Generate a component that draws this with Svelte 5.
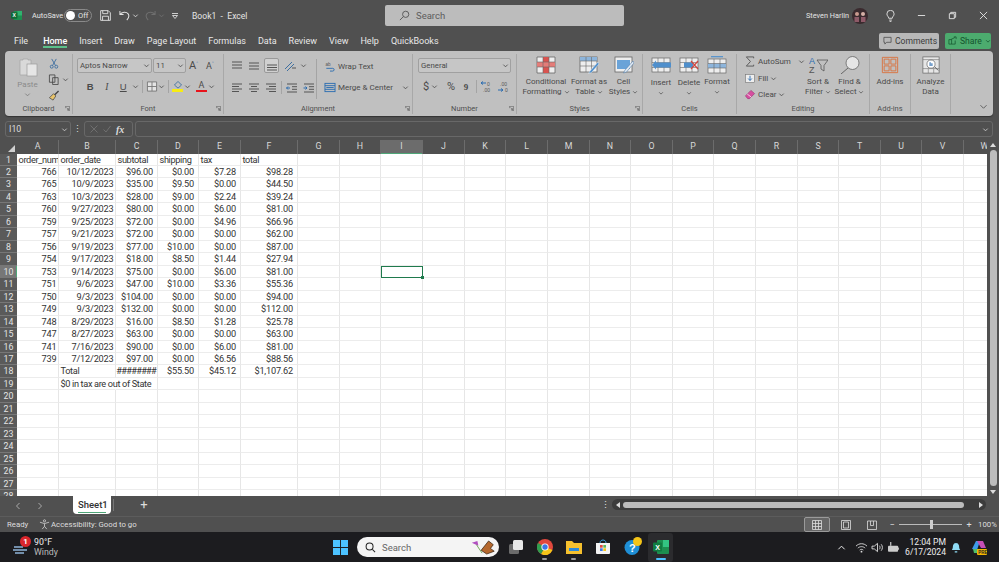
<script>
  const tabs = ['File', 'Home', 'Insert', 'Draw', 'Page Layout', 'Formulas', 'Data', 'Review', 'View', 'Help', 'QuickBooks'];
  const cols = 'A B C D E F G H I J K L M N O P Q R S T U V W'.split(' ');
  const head = ['order_num', 'order_date', 'subtotal', 'shipping', 'tax', 'total'];

  const rows = [
    ['766', '10/12/2023', '$96.00', '$0.00', '$7.28', '$98.28'],
    ['765', '10/9/2023', '$35.00', '$9.50', '$0.00', '$44.50'],
    ['763', '10/3/2023', '$28.00', '$9.00', '$2.24', '$39.24'],
    ['760', '9/27/2023', '$80.00', '$0.00', '$6.00', '$81.00'],
    ['759', '9/25/2023', '$72.00', '$0.00', '$4.96', '$66.96'],
    ['757', '9/21/2023', '$72.00', '$0.00', '$0.00', '$62.00'],
    ['756', '9/19/2023', '$77.00', '$10.00', '$0.00', '$87.00'],
    ['754', '9/17/2023', '$18.00', '$8.50', '$1.44', '$27.94'],
    ['753', '9/14/2023', '$75.00', '$0.00', '$6.00', '$81.00'],
    ['751', '9/6/2023', '$47.00', '$10.00', '$3.36', '$55.36'],
    ['750', '9/3/2023', '$104.00', '$0.00', '$0.00', '$94.00'],
    ['749', '9/3/2023', '$132.00', '$0.00', '$0.00', '$112.00'],
    ['748', '8/29/2023', '$16.00', '$8.50', '$1.28', '$25.78'],
    ['747', '8/27/2023', '$63.00', '$0.00', '$0.00', '$63.00'],
    ['741', '7/16/2023', '$90.00', '$0.00', '$6.00', '$81.00'],
    ['739', '7/12/2023', '$97.00', '$0.00', '$6.56', '$88.56'],
  ];

  // sheet contents by row, header row first
  const sheet = [];
  for (let r = 1; r <= 28; r++) {
    const cells = cols.map(() => ({ text: '', right: false, spill: false }));
    if (r === 1) head.forEach((t, i) => (cells[i].text = t));
    else if (r <= 17) rows[r - 2].forEach((t, i) => (cells[i] = { text: t, right: true, spill: false }));
    else if (r === 18) {
      cells[1].text = 'Total';
      ['########', '$55.50', '$45.12', '$1,107.62'].forEach((t, i) => (cells[i + 2] = { text: t, right: true, spill: false }));
    } else if (r === 19) {
      cells[1] = { text: '$0 in tax are out of State', right: false, spill: true };
    }
    sheet.push({ n: r, cells });
  }
</script>

{#snippet chev(cls = '')}
  <svg class="chev {cls}" viewBox="0 0 8 8"><path d="M1.5 3 L4 5.5 L6.5 3" fill="none" stroke="currentColor" stroke-width="1"/></svg>
{/snippet}

{#snippet launcher()}
  <svg class="launcher" viewBox="0 0 7 7"><path d="M.5 3V.5H6.5V6.5H3.5M2 2.2L5 5M5 3V5H3" fill="none" stroke="#555" stroke-width=".8"/></svg>
{/snippet}

<div class="app">
  <header class="titlebar">
    <svg class="xl" viewBox="0 0 12 12"><rect x="3" y="1" width="9" height="10" rx="1" fill="#1d8f4f"/><rect x="7" y="1" width="5" height="5" fill="#2fb36f"/><rect x="0" y="2.5" width="7" height="7" rx="1" fill="#0f6b37"/><text x="1.6" y="8" font-size="5.5" fill="#fff" font-family="Liberation Sans" font-weight="700">X</text></svg>
    <span class="autosave">AutoSave</span>
    <span class="toggle"><i></i>Off</span>
    <svg class="qa save" viewBox="0 0 12 12"><path d="M.7.7H9L11.3 3V11.3H.7ZM3 .7V4H8.5V.7M2.8 11.3V6.8H9.2V11.3" fill="none" stroke="#e2e2e2"/></svg>
    <svg class="qa undo" viewBox="0 0 12 12"><path d="M1 1V5H5M1.2 5C3 1.8 8 1.5 10 4.2C11.5 6.5 10.5 9 8.5 11" fill="none" stroke="#e2e2e2" stroke-width="1.1"/></svg>
    <span class="qchev">{@render chev()}</span>
    <svg class="qa redo" viewBox="0 0 12 12"><path d="M11 1V5H7M10.8 5C9 1.8 4 1.5 2 4.2C.5 6.5 1.5 9 3.5 11" fill="none" stroke="#6f6f6f" stroke-width="1.1"/></svg>
    <span class="qchev dim">{@render chev()}</span>
    <svg class="qa custom" viewBox="0 0 8 8"><path d="M1 1.5H7M1.5 3.5L4 6.5L6.5 3.5Z" fill="none" stroke="#ddd" stroke-width=".9"/></svg>
    <span class="doc">Book1 &nbsp;-&nbsp; Excel</span>
    <div class="search">
      <svg viewBox="0 0 12 12"><circle cx="7.3" cy="4.7" r="3.4" fill="none" stroke="#555"/><path d="M4.8 7.2L1 11" stroke="#555"/></svg>
      <span>Search</span>
    </div>
    <span class="user">Steven Harlin</span>
    <svg class="avatar" viewBox="0 0 16 16"><circle cx="8" cy="8" r="8" fill="#3a2a2e"/><circle cx="5" cy="6" r="2" fill="#c99a8e"/><circle cx="11" cy="6" r="2" fill="#d6b0a6"/><path d="M2.5 14V9H7V14ZM9 14V9H13.5V14Z" fill="#8d5a68"/></svg>
    <svg class="bulb" viewBox="0 0 10 13"><path d="M3 9C3 7 1 6.5 1 4.2A4 4 0 0 1 9 4.2C9 6.5 7 7 7 9ZM3.5 11H6.5M4 12.5H6" fill="none" stroke="#e6e6e6"/></svg>
    <svg class="win-btn" viewBox="0 0 10 10"><path d="M1 5H9" stroke="#e6e6e6"/></svg>
    <svg class="win-btn" viewBox="0 0 10 10"><path d="M1.5 3H7V8.5H1.5ZM3 3V1.5H8.5V7H7" fill="none" stroke="#e6e6e6"/></svg>
    <svg class="win-btn" viewBox="0 0 10 10"><path d="M1 1L9 9M9 1L1 9" stroke="#e6e6e6"/></svg>
  </header>

  <nav class="menubar">
    {#each tabs as tab}
      <span class="tab" class:active={tab === 'Home'} class:file={tab === 'File'}>{tab}</span>
    {/each}
    <span class="comments">
      <svg viewBox="0 0 10 10"><path d="M1 1.5H9V7H4L2 9V7H1Z" fill="none" stroke="#444" stroke-width=".8"/></svg>
      Comments
    </span>
    <span class="share">
      <svg viewBox="0 0 10 10"><path d="M1 4H4V9H1ZM4 9H8V5M3 4L8 1.5M6.5 1H9V3.5" fill="none" stroke="#14532d" stroke-width=".8"/></svg>
      Share {@render chev()}
    </span>
  </nav>

  <section class="ribbon">
    <div class="group clip">
      <div class="body clip-body">
        <div class="paste">
          <svg viewBox="0 0 20 20"><path d="M2 3H5V2H10V3H13V18H2Z" fill="#d9d9d9" stroke="#a5a5a5" stroke-width=".7"/><rect x="9" y="7" width="10" height="12" fill="#e6e6e6" stroke="#9b9b9b" stroke-width=".7"/></svg>
          <span>Paste</span>
          {@render chev()}
        </div>
        <div class="clip-tools">
          <svg class="ico" viewBox="0 0 12 12"><path d="M3.5 1L7.5 8M8.5 1L4.5 8" stroke="#3e6fa0" fill="none"/><circle cx="3.5" cy="9.5" r="1.6" fill="none" stroke="#3e6fa0"/><circle cx="8.5" cy="9.5" r="1.6" fill="none" stroke="#3e6fa0"/></svg>
          <span class="tool-row">
            <svg class="ico" viewBox="0 0 12 12"><path d="M1 1H7V9H1ZM4.5 4H10.5V11.5H4.5Z" fill="#c1c1c1" stroke="#444" stroke-width=".9"/></svg>
            {@render chev()}
          </span>
          <svg class="ico" viewBox="0 0 12 12"><path d="M11 1L6.5 5.5" stroke="#444" stroke-width="1.5"/><path d="M5.5 4L8 6.5L5 11L1 8.5Z" fill="#e9c46a" stroke="#444" stroke-width=".8"/></svg>
        </div>
      </div>
      <div class="label">Clipboard{@render launcher()}</div>
    </div>

    <div class="group font">
      <div class="body stack">
        <div class="line first">
          <span class="select fontname">Aptos Narrow {@render chev()}</span>
          <span class="select fontsize">11 {@render chev()}</span>
          <span class="bigA">A<sup>˄</sup></span>
          <span class="smallA">A<sup>˅</sup></span>
        </div>
        <div class="line second">
          <b class="fmt">B</b>
          <i class="fmt serif">I</i>
          <u class="fmt">U</u>
          {@render chev()}
          <span class="vsep"></span>
          <svg class="ico" viewBox="0 0 12 12"><path d="M1 1H11V11H1ZM6 1V11M1 6H11" fill="#e4e4e4" stroke="#777"/></svg>
          {@render chev()}
          <span class="vsep"></span>
          <span class="swatch">
            <svg class="ico" viewBox="0 0 12 9"><path d="M6 .5L10 4.5L6 8L2 4.5Z" fill="none" stroke="#3e6fa0"/></svg>
            <i class="yellow"></i>
          </span>
          {@render chev()}
          <span class="swatch colorA">
            <span>A</span>
            <i class="red"></i>
          </span>
          {@render chev()}
        </div>
      </div>
      <div class="label">Font{@render launcher()}</div>
    </div>

    <div class="group align">
      <div class="body align-body">
        <div class="stack align-icons">
          <div class="line">
            <svg class="ico" viewBox="0 0 14 12"><path d="M2 2H12M2 5H12M2 8H12" stroke="#555" fill="none"/></svg>
            <svg class="ico" viewBox="0 0 14 12"><path d="M2 3H12M2 6H12M2 9H12" stroke="#555" fill="none"/></svg>
            <span class="on"><svg class="ico" viewBox="0 0 14 12"><path d="M2 5H12M2 7.5H12M2 10H12" stroke="#555" fill="none"/></svg></span>
            <svg class="ico orient" viewBox="0 0 14 12"><path d="M2 9L9 2M4 11L11 4" stroke="#3e6fa0" fill="none"/><path d="M9 8H13" stroke="#555"/></svg>
            {@render chev()}
          </div>
          <div class="line">
            <svg class="ico" viewBox="0 0 14 12"><path d="M2 2H12M2 4.5H9M2 7H12M2 9.5H9" stroke="#555" fill="none"/></svg>
            <svg class="ico" viewBox="0 0 14 12"><path d="M2 2H12M4 4.5H10M2 7H12M4 9.5H10" stroke="#555" fill="none"/></svg>
            <svg class="ico" viewBox="0 0 14 12"><path d="M2 2H12M5 4.5H12M2 7H12M5 9.5H12" stroke="#555" fill="none"/></svg>
            <span class="vsep"></span>
            <svg class="ico" viewBox="0 0 14 12"><path d="M2 2H12M7 4.7H12M7 7.3H12M2 10H12" stroke="#555" fill="none"/><path d="M1.5 6H5M3 4.5L1.5 6L3 7.5" stroke="#2b6cb0" fill="none"/></svg>
            <svg class="ico" viewBox="0 0 14 12"><path d="M2 2H12M7 4.7H12M7 7.3H12M2 10H12" stroke="#555" fill="none"/><path d="M1.5 6H5M3.5 4.5L5 6L3.5 7.5" stroke="#2b6cb0" fill="none"/></svg>
          </div>
        </div>
        <span class="vsep tall"></span>
        <div class="stack wrap">
          <span class="small-btn">
            <svg class="ico" viewBox="0 0 12 12"><text x="1" y="5" font-size="5" fill="#555" font-family="Liberation Sans">ab</text><path d="M2 8H9C11 8 11 11 9 11H6" fill="none" stroke="#2b6cb0"/></svg>
            Wrap Text
          </span>
          <span class="small-btn merge">
            <svg class="ico" viewBox="0 0 12 12"><rect x=".5" y="1.5" width="11" height="9" fill="none" stroke="#2b6cb0"/><path d="M.5 4H11.5M.5 8H11.5M2 6H10" stroke="#2b6cb0" fill="none"/></svg>
            Merge &amp; Center
            {@render chev()}
          </span>
        </div>
      </div>
      <div class="label">Alignment{@render launcher()}</div>
    </div>

    <div class="group number">
      <div class="body stack">
        <span class="select general">General {@render chev()}</span>
        <div class="line numfmt">
          <span class="sym">$</span>{@render chev()}
          <span class="sym pct">%</span>
          <b class="sym comma">9</b>
          <span class="vsep"></span>
          <svg class="ico dec" viewBox="0 0 14 12"><path d="M6 2H1M3 .5L1 2L3 3.5" stroke="#2b6cb0" fill="none"/><text x="7" y="5" font-size="5" fill="#555" font-family="Liberation Sans">0</text><text x="3" y="11" font-size="5" fill="#555" font-family="Liberation Sans">.00</text></svg>
          <svg class="ico dec" viewBox="0 0 14 12"><text x="3" y="5" font-size="5" fill="#555" font-family="Liberation Sans">.00</text><text x="8" y="11" font-size="5" fill="#555" font-family="Liberation Sans">0</text><path d="M1 9H6M4 7.5L6 9L4 10.5" stroke="#2b6cb0" fill="none"/></svg>
        </div>
      </div>
      <div class="label">Number{@render launcher()}</div>
    </div>

    <div class="group styles">
      <div class="body row-btns">
        <div class="big w44">
          <svg viewBox="0 0 20 18"><path d="M1 1H19V17H1Z" fill="#eee" stroke="#666" stroke-width=".8"/><rect x="7" y="1" width="6" height="5" fill="#d9534f"/><rect x="1" y="6" width="18" height="5" fill="#e47c78"/><rect x="7" y="11" width="6" height="6" fill="#d9534f"/><path d="M7 1V17M13 1V17M1 6H19M1 11H19" stroke="#666" stroke-width=".6"/></svg>
          <span>Conditional<br />Formatting {@render chev()}</span>
        </div>
        <div class="big w42">
          <svg viewBox="0 0 20 18"><rect x="1" y="1" width="17" height="15" fill="#eee" stroke="#666" stroke-width=".8"/><rect x="1" y="1" width="17" height="4" fill="#8db5dc"/><path d="M7 1V16M12.5 1V16M1 5H18M1 10H18" stroke="#666" stroke-width=".6"/><path d="M19 6L11 15L9.5 17.5L12.5 16.5L20 8Z" fill="#4f8fcc" stroke="#fff" stroke-width=".4"/></svg>
          <span>Format as<br />Table {@render chev()}</span>
        </div>
        <div class="big w25">
          <svg viewBox="0 0 20 18"><rect x="1" y="1" width="17" height="15" fill="#eee" stroke="#666" stroke-width=".8"/><rect x="3" y="4" width="13" height="9" fill="#6aa3d8"/><path d="M19 5L11 14L9.5 17L12.5 16L20 7Z" fill="#dfe9f3" stroke="#3e6fa0" stroke-width=".5"/></svg>
          <span>Cell<br />Styles {@render chev()}</span>
        </div>
      </div>
      <div class="label plain">Styles{@render launcher()}</div>
    </div>

    <div class="group cells">
      <div class="body row-btns">
        <div class="big w28">
          <svg viewBox="0 0 20 18"><rect x="1" y="2" width="18" height="14" fill="#eee" stroke="#666" stroke-width=".7"/><path d="M7 2V16M13 2V16M1 6.5H19M1 11.5H19" stroke="#666" stroke-width=".6"/><rect x="4" y="6.5" width="16" height="5" fill="#4f8fcc"/><path d="M5 4.5L1 9L5 13.5Z" fill="#4f8fcc"/></svg>
          <span class="cell-name">Insert<br />{@render chev()}</span>
        </div>
        <div class="big w28">
          <svg viewBox="0 0 20 18"><rect x="1" y="2" width="18" height="14" fill="#eee" stroke="#666" stroke-width=".7"/><path d="M7 2V16M13 2V16M1 6.5H19M1 11.5H19" stroke="#666" stroke-width=".6"/><rect x="5" y="6.5" width="9" height="5" fill="#4f8fcc"/><path d="M12 5L19 13M19 5L12 13" stroke="#d0453f" stroke-width="1.2"/></svg>
          <span class="cell-name">Delete<br />{@render chev()}</span>
        </div>
        <div class="big w28">
          <svg viewBox="0 0 20 18"><path d="M4 .7H16" stroke="#4f8fcc" stroke-width="1.2"/><rect x="1" y="3" width="18" height="14" fill="#eee" stroke="#666" stroke-width=".7"/><rect x="1" y="7.5" width="18" height="4.5" fill="#8db5dc"/><path d="M7 3V17M13 3V17M1 7.5H19M1 12H19" stroke="#666" stroke-width=".6"/></svg>
          <span>Format<br />{@render chev()}</span>
        </div>
      </div>
      <div class="label plain">Cells</div>
    </div>

    <div class="group editing">
      <div class="body row-btns">
        <div class="edit-list">
          <span class="small-btn sum">
            <svg class="ico" viewBox="0 0 12 12"><path d="M10 2.5V1H2L6.5 6L2 11H10V9.5" fill="none" stroke="#555"/></svg>
            AutoSum {@render chev('gap')}
          </span>
          <span class="small-btn">
            <svg class="ico" viewBox="0 0 12 12"><rect x="1" y="1.5" width="10" height="9" fill="#eee" stroke="#777" stroke-width=".7"/><path d="M6 3V8M4 6L6 8.2L8 6" stroke="#2b6cb0" fill="none"/></svg>
            Fill {@render chev()}
          </span>
          <span class="small-btn">
            <svg class="ico" viewBox="0 0 12 12"><path d="M1 7.5L7 1.5L11 5L5.5 10.5H3.5Z" fill="#d64fa0" stroke="#8f2a6b" stroke-width=".6"/><path d="M3 5.5L7.5 9" stroke="#fff" stroke-width=".8"/></svg>
            Clear {@render chev()}
          </span>
        </div>
        <div class="big w32">
          <svg viewBox="0 0 20 18"><text x="1" y="8" font-size="9" fill="#2b6cb0" font-family="Liberation Sans">A</text><text x="1" y="17" font-size="9" fill="#555" font-family="Liberation Sans">Z</text><path d="M9 4H20L16 9.5V15L13 13V9.5Z" fill="none" stroke="#555" stroke-width=".8"/></svg>
          <span>Sort &amp;<br />Filter {@render chev()}</span>
        </div>
        <div class="big w31">
          <svg viewBox="0 0 20 18"><circle cx="12.5" cy="7" r="6.5" fill="#e6e6e6" stroke="#666" stroke-width=".8"/><path d="M8 12L1 18" stroke="#666"/></svg>
          <span>Find &amp;<br />Select {@render chev()}</span>
        </div>
      </div>
      <div class="label plain">Editing</div>
    </div>

    <div class="group addins">
      <div class="body row-btns">
        <div class="big w41">
          <svg viewBox="0 0 20 20"><path d="M1.5 1.5H18.5V18.5H1.5ZM3.5 3.5H9V9H3.5ZM11 3.5H16.5V9H11ZM3.5 11H9V16.5H3.5ZM11 11H16.5V16.5H11Z" fill="none" stroke="#d9713c"/></svg>
          <span>Add-ins</span>
        </div>
      </div>
      <div class="label plain">Add-ins</div>
    </div>

    <div class="group analyze">
      <div class="body row-btns">
        <div class="big w40">
          <svg viewBox="0 0 20 20"><rect x="1" y="1" width="18" height="18" fill="#e6e6e6" stroke="#666" stroke-width=".8"/><path d="M1 4H19M1 14H19M7 14V19M13 14V19" stroke="#666" stroke-width=".6"/><circle cx="10" cy="9" r="4.5" fill="#fff" stroke="#555" stroke-width=".7"/><path d="M9 11V7M11 11V8" stroke="#2b6cb0" stroke-width="1.2"/><path d="M14 12L18 16" stroke="#555"/></svg>
          <span>Analyze<br />Data</span>
        </div>
      </div>
    </div>

    <svg class="collapse" viewBox="0 0 8 8"><path d="M.5 2.5L4 6L7.5 2.5" fill="none" stroke="#555"/></svg>
  </section>

  <div class="formula">
    <span class="namebox">I10 {@render chev()}</span>
    <span class="dots">⋮</span>
    <span class="fx-btns">
      <svg viewBox="0 0 8 8"><path d="M.5.5L7.5 7.5M7.5.5L.5 7.5" stroke="#777" stroke-width=".8"/></svg>
      <svg viewBox="0 0 8 8"><path d="M.5 4.5L3 7L7.5 1" stroke="#777" stroke-width=".8" fill="none"/></svg>
      <em>fx</em>
    </span>
    <span class="fx-input">{@render chev()}</span>
  </div>

  <div class="sheet-area">
    <div class="sheet">
      <div class="corner"><svg viewBox="0 0 8 8"><path d="M8 0V8H0Z" fill="#d0d0d0"/></svg></div>
      {#each cols as col}
        <div class="colhead" class:sel={col === 'I'}>{col}</div>
      {/each}
      {#each sheet as row}
        <div class="rowhead" class:sel={row.n === 10}>{row.n}</div>
        {#each row.cells as cell, c}
          <div
            class="cell"
            class:right={cell.right}
            class:money={cell.right && c >= 2 && cell.text[0] === '$'}
            class:hash={cell.text[0] === '#'}
            class:spill={cell.spill}
            class:active={row.n === 10 && cols[c] === 'I'}
          >{cell.text}</div>
        {/each}
      {/each}
    </div>
    <div class="vscroll">
      <svg viewBox="0 0 8 8"><path d="M1 6L4 2L7 6Z" fill="#ddd"/></svg>
      <i></i>
      <svg viewBox="0 0 8 8"><path d="M1 2L4 6L7 2Z" fill="#ddd"/></svg>
    </div>
  </div>

  <div class="sheetbar">
    <svg class="nav" viewBox="0 0 8 8"><path d="M5.5 1L2.5 4L5.5 7" fill="none" stroke="#aaa"/></svg>
    <svg class="nav" viewBox="0 0 8 8"><path d="M2.5 1L5.5 4L2.5 7" fill="none" stroke="#aaa"/></svg>
    <span class="sheettab"><span>Sheet1</span></span>
    <span class="tabsep"></span>
    <span class="plus">+</span>
    <span class="sdots">⋮</span>
    <div class="hscroll">
      <svg viewBox="0 0 8 8"><path d="M6 1L2 4L6 7Z" fill="#ddd"/></svg>
      <i></i>
      <svg viewBox="0 0 8 8"><path d="M2 1L6 4L2 7Z" fill="#ddd"/></svg>
    </div>
  </div>

  <footer class="status">
    <span class="ready">Ready</span>
    <svg class="acc" viewBox="0 0 12 12"><circle cx="6" cy="2" r="1.2" fill="none" stroke="#ddd" stroke-width=".8"/><path d="M1 3.5L6 5L11 3.5M6 5V8M6 8L3.5 11M6 8L8.5 11" fill="none" stroke="#ddd" stroke-width=".8"/></svg>
    <span>Accessibility: Good to go</span>
    <div class="views">
      <span class="view on"><svg viewBox="0 0 10 10"><path d="M.5.5H9.5V9.5H.5ZM3.5.5V9.5M6.5.5V9.5M.5 3.5H9.5M.5 6.5H9.5" fill="none" stroke="#ddd" stroke-width=".8"/></svg></span>
      <span class="view"><svg viewBox="0 0 10 10"><path d="M.5.5H9.5V9.5H.5ZM2.5 2H7.5V8H2.5Z" fill="none" stroke="#ddd" stroke-width=".8"/></svg></span>
      <span class="view"><svg viewBox="0 0 10 10"><path d="M.5 1H9.5V9.5H.5ZM3.5 1V5.5H6.5V1" fill="none" stroke="#ddd" stroke-width=".8"/></svg></span>
    </div>
    <span class="zoomctl">−</span>
    <span class="slider"><i></i></span>
    <span class="zoomctl">+</span>
    <span class="pct100">100%</span>
  </footer>

  <div class="taskbar">
    <div class="weather">
      <svg viewBox="0 0 16 12"><path d="M1 4H10M0 7H14M2 10H11" stroke="#8fb4d9" stroke-width="1.4" fill="none"/></svg>
      <span class="badge">1</span>
      <span class="wtext">90°F<small>Windy</small></span>
    </div>
    <div class="center">
      <svg class="winlogo" viewBox="0 0 16 16"><path d="M0 0H7.5V7.5H0ZM8.5 0H16V7.5H8.5ZM0 8.5H7.5V16H0ZM8.5 8.5H16V16H8.5Z" fill="#4cc2ff"/></svg>
      <div class="tsearch">
        <svg viewBox="0 0 12 12"><circle cx="5" cy="5" r="3.8" fill="none" stroke="#222" stroke-width="1.1"/><path d="M8 8L11 11" stroke="#222" stroke-width="1.1"/></svg>
        <span>Search</span>
        <svg class="fly" viewBox="0 0 30 16"><path d="M3 3L9 1L10 6Z" fill="#b04fc0"/><path d="M8 5L14 14" fill="none" stroke="#6aa84f"/><path d="M13 11L21 1L26 5L23 9L27 12L19 15Z" fill="#b5682e" stroke="#3a2412" stroke-width=".8"/></svg>
      </div>
      <svg class="tb tbgap" viewBox="0 0 16 16"><rect x="1" y="5" width="10" height="10" rx="1.5" fill="#6b6b6b"/><rect x="5" y="1" width="10" height="10" rx="1.5" fill="#e8e8e8"/></svg>
      <span class="tbwrap">
        <svg class="tb" viewBox="0 0 16 16"><circle cx="8" cy="8" r="8" fill="#e0483e"/><path d="M8 8L15.5 11A8 8 0 0 1 4 15Z" fill="#f5c518"/><path d="M8 8L4 15A8 8 0 0 1 1 4Z" fill="#2f9e4f"/><circle cx="8" cy="8" r="3.6" fill="#fff"/><circle cx="8" cy="8" r="2.7" fill="#3b78e7"/></svg>
        <i></i>
      </span>
      <span class="tbwrap">
        <svg class="tb" viewBox="0 0 16 16"><path d="M0 2H6L8 4H16V15H0Z" fill="#f5c02e"/><rect x="3" y="9" width="10" height="3" fill="#2b88d8"/></svg>
        <i></i>
      </span>
      <svg class="tb tbgap" viewBox="0 0 16 16"><path d="M1 4H15V14Q15 15 14 15H2Q1 15 1 14Z" fill="#f3f3f3"/><path d="M5 4C5 0 11 0 11 4" fill="none" stroke="#3aa0e0"/><path d="M5 6H7.7V8.7H5Z" fill="#e0483e"/><path d="M8.3 6H11V8.7H8.3Z" fill="#5cb85c"/><path d="M5 9.3H7.7V12H5Z" fill="#3b78e7"/><path d="M8.3 9.3H11V12H8.3Z" fill="#f5c518"/></svg>
      <span class="tbwrap helpico">
        <svg class="tb" viewBox="0 0 16 16"><circle cx="8" cy="8.5" r="7.5" fill="#1f8fd6"/><text x="5" y="13" font-size="11" fill="#fff" font-weight="700" font-family="Liberation Sans">?</text></svg>
        <b></b>
      </span>
      <span class="tbwrap xlcur">
        <svg class="tb" viewBox="0 0 16 16"><rect x="4" y="1" width="12" height="14" rx="1" fill="#1d8f4f"/><rect x="10" y="1" width="6" height="7" fill="#33c481"/><rect x="0" y="3.5" width="9" height="9" rx="1" fill="#107c41"/><text x="2.2" y="10.5" font-size="7" fill="#fff" font-family="Liberation Sans" font-weight="700">X</text></svg>
        <i></i>
      </span>
    </div>
    <div class="tray">
      <svg class="t chevup" viewBox="0 0 10 10"><path d="M1.5 7L5 3.5L8.5 7" fill="none" stroke="#eee" stroke-width="1.1"/></svg>
      <svg class="t" viewBox="0 0 14 12"><path d="M1 4.5C4.5 1 9.5 1 13 4.5M3 6.7C5.3 4.5 8.7 4.5 11 6.7M5 8.8C6.2 7.8 7.8 7.8 9 8.8" fill="none" stroke="#ddd"/><circle cx="7" cy="10.5" r="1" fill="#ddd"/></svg>
      <svg class="t" viewBox="0 0 14 12"><path d="M1 4.5H3.5L7 1.5V10.5L3.5 7.5H1Z" fill="none" stroke="#ddd"/><path d="M9 4C10 5 10 7 9 8M11 2.5C12.8 4.5 12.8 7.5 11 9.5" fill="none" stroke="#ddd"/></svg>
      <svg class="t" viewBox="0 0 14 12"><rect x="1" y="4" width="11" height="6.5" rx="1" fill="#ccc"/><path d="M12.5 6V8.5" stroke="#ccc"/><path d="M4 0V4" stroke="#ddd" stroke-width="1.2"/></svg>
      <span class="clock">12:04 PM<br />6/17/2024</span>
      <svg class="bell" viewBox="0 0 12 14"><path d="M1 10.5C2.5 9 2 7 2.5 5A3.6 3.6 0 0 1 9.5 5C10 7 9.5 9 11 10.5ZM4.5 12H7.5V13.5H4.5Z" fill="#8fdcf5"/></svg>
      <svg class="copilot" viewBox="0 0 16 16"><path d="M1 10L5 2H9L6 11Z" fill="#3d9be9"/><path d="M6 2H12L15 9H10Z" fill="#c64fb5"/><path d="M2 10H9L7 14H3Z" fill="#4fbf6a"/><rect x="6" y="10" width="10" height="6" rx="1" fill="#f5b800"/><text x="7.2" y="15" font-size="4.5" fill="#222" font-weight="700" font-family="Liberation Sans">PRE</text></svg>
    </div>
  </div>
</div>

<style>
:global(body) {
  margin: 0;
  background: #505050;
}
.app {
  width: 999px;
  height: 562px;
  display: flex;
  flex-direction: column;
  overflow: hidden;
  background: #505050;
  font-family: Roboto, "Noto Sans", sans-serif;
  color: #e4e4e4;
  font-size: 8px;
}
svg { display: block; flex: none; }

/* title bar */
.titlebar {
  height: 30px;
  flex: none;
  display: flex;
  align-items: center;
  padding-left: 11px;
  padding-top: 1px;
  box-sizing: border-box;
}
.xl { width: 11px; height: 11px; margin-right: 10px; }
.autosave { width: 32px; font-size: 7.4px; }
.toggle {
  display: flex;
  align-items: center;
  gap: 3px;
  width: 28px;
  height: 13px;
  box-sizing: border-box;
  border: 1px solid #8a8a8a;
  border-radius: 7px;
  padding-left: 1px;
  font-size: 7.5px;
}
.toggle i { width: 9px; height: 9px; border-radius: 50%; background: #fff; }
.qa { width: 11px; height: 11px; }
.save { margin-left: 8px; }
.undo { margin-left: 8px; }
.qchev { width: 8px; margin-left: 2px; color: #ddd; }
.qchev .chev { color: inherit; }
.qchev.dim { color: #707070; }
.redo { margin-left: 5px; }
.custom { width: 8px; height: 8px; margin-left: 5px; }
.doc { margin-left: 13px; width: 193px; font-size: 8.6px; white-space: nowrap; }
.search {
  width: 239px;
  height: 21px;
  background: #bcbcbc;
  border-radius: 2px;
  display: flex;
  align-items: center;
  padding-left: 14px;
  box-sizing: border-box;
  gap: 6px;
  color: #5c5c5c;
  font-size: 9.5px;
}
.search svg { width: 11px; height: 11px; }
.user { margin-left: 182px; width: 46px; font-size: 7.3px; white-space: nowrap; }
.avatar { width: 16px; height: 16px; }
.bulb { width: 9px; height: 12px; margin-left: 18px; }
.win-btn { width: 9px; height: 9px; margin-left: 22px; }

/* menu */
.menubar {
  height: 21px;
  flex: none;
  display: flex;
  align-items: center;
  padding-left: 14px;
  gap: 12px;
  font-size: 9px;
}
.tab { position: relative; white-space: nowrap; color: #e8e8e8; }
.tab.file { margin-right: 3px; }
.tab.active { font-weight: 500; color: #fff; }
.tab.active::after {
  content: "";
  position: absolute;
  left: 0;
  right: 0;
  bottom: -2px;
  height: 1.5px;
  background: #5cc08a;
}
.comments, .share {
  display: flex;
  align-items: center;
  height: 16px;
  border-radius: 2px;
  gap: 3px;
  font-size: 8.6px;
  box-sizing: border-box;
  white-space: nowrap;
}
.comments {
  margin-left: auto;
  width: 60px;
  padding-left: 4px;
  background: #b8b8b8;
  color: #3c3c3c;
}
.share {
  width: 46px;
  margin-right: 8px;
  margin-left: -6px;
  padding-left: 3px;
  background: #4cab6e;
  color: #14532d;
}
.comments svg, .share svg { width: 9px; height: 9px; }
.share .chev { width: 6px; height: 6px; color: #14532d; }

/* ribbon */
.ribbon {
  position: relative;
  flex: none;
  height: 65px;
  margin: 0 6px 0 5px;
  background: #c0c0c0;
  border-radius: 4px;
  display: flex;
  color: #4a4a4a;
  font-size: 8px;
  padding: 3px 0 2px;
  box-sizing: border-box;
  box-shadow: 0 1px 1px #333;
}
.group {
  flex: none;
  display: flex;
  flex-direction: column;
  border-right: 1px solid #a8a8a8;
  box-sizing: border-box;
}
.clip { width: 68px; }
.font { width: 151px; }
.align { width: 189px; }
.number { width: 104px; }
.styles { width: 126px; }
.cells { width: 94px; }
.editing { width: 133px; }
.addins { width: 41px; }
.analyze { width: 40px; }
.body { flex: 1; min-height: 0; }
.label {
  height: 11px;
  line-height: 11px;
  text-align: center;
  font-size: 7.5px;
  position: relative;
  color: #505050;
}
.launcher {
  position: absolute;
  right: 2px;
  top: 3px;
  width: 5px;
  height: 5px;
}
.chev { width: 7px; height: 7px; flex: none; color: #505050; }
.ico { width: 12px; height: 11px; flex: none; }
.vsep { width: 1px; height: 13px; background: #a4a4a4; flex: none; }
.stack { display: flex; flex-direction: column; }
.line { display: flex; align-items: center; }

.clip-body { display: flex; padding-left: 9px; }
.paste {
  width: 27px;
  display: flex;
  flex-direction: column;
  align-items: center;
  color: #8b8b8b;
  font-size: 8px;
}
.paste svg:first-child { width: 20px; height: 20px; margin-top: 3px; margin-bottom: 3px; }
.paste .chev { opacity: .6; margin-top: 2px; }
.clip-tools {
  display: flex;
  flex-direction: column;
  gap: 5px;
  padding: 4px 0 0 7px;
}
.tool-row { display: flex; align-items: center; gap: 2px; }

.font .stack { padding: 4px 0 0 4px; gap: 6px; }
.select {
  display: flex;
  align-items: center;
  justify-content: space-between;
  height: 15px;
  box-sizing: border-box;
  border: 1px solid #a0a0a0;
  border-radius: 2px;
  padding: 0 1px 0 2px;
  font-size: 7.8px;
  background: #c6c6c6;
  white-space: nowrap;
}
.fontname { width: 75px; }
.fontsize { width: 33px; margin-left: 1px; }
.bigA { font-size: 11px; margin-left: 3px; width: 17px; }
.smallA { font-size: 9px; width: 14px; }
.bigA sup, .smallA sup { font-size: 6px; color: #2b6cb0; vertical-align: 3px; line-height: 0; }
.second { padding-left: 5px; font-size: 9.5px; height: 15px; }
.fmt { width: 16.5px; text-align: center; font-family: "Liberation Sans", sans-serif; }
.serif { font-family: "Liberation Serif", serif; }
.second .ico { margin-left: 2px; }
.second .vsep { margin: 0 1px 0 3px; }
.swatch {
  display: flex;
  flex-direction: column;
  align-items: center;
  width: 12px;
  margin-left: 2px;
}
.swatch .ico { height: 8px; margin-left: 0; }
.swatch i { width: 11px; height: 2.5px; }
.yellow { background: #f7ec13; }
.red { background: #e8141c; }
.colorA { margin-left: 5px; font-size: 9px; line-height: 9px; }

.align-body { display: flex; }
.align-icons { padding: 3px 0 0 6px; width: 92px; box-sizing: border-box; gap: 5px; }
.align-icons .ico { width: 14px; height: 12px; margin-right: 3px; }
.align-icons .line { height: 17px; }
.on {
  border: 1px solid #9a9a9a;
  border-radius: 2px;
  background: #d0d0d0;
  width: 15px;
  height: 15px;
  display: flex;
  align-items: center;
  justify-content: center;
  box-sizing: border-box;
  margin-right: 3px;
}
.on .ico { margin: 0; }
.orient { margin-left: 1px; }
.align-icons .vsep { margin: 0 3px 0 0; }
.tall { height: 40px; margin-top: 5px; }
.wrap { padding: 6px 0 0 7px; gap: 8px; }
.small-btn { display: flex; align-items: center; gap: 2px; white-space: nowrap; font-size: 8px; height: 13px; }
.merge .chev { margin-left: 7px; }

.number .stack { padding: 4px 0 0 5px; gap: 6px; }
.general { width: 93px; }
.numfmt { height: 15px; font-size: 11px; padding-left: 3px; }
.sym { width: 10px; text-align: center; }
.pct { margin-left: 5px; width: 16px; }
.comma { width: 14px; font-size: 9px; font-family: "Liberation Serif", serif; }
.numfmt .vsep { margin: 0 3px; }
.dec { width: 14px; height: 12px; margin-right: 3px; }

.row-btns { display: flex; }
.styles .row-btns { padding-left: 7px; }
.cells .row-btns { padding-left: 4px; }
.big {
  flex: none;
  display: flex;
  flex-direction: column;
  align-items: center;
  text-align: center;
  font-size: 8px;
  line-height: 10.4px;
  white-space: nowrap;
}
.big svg:first-child { width: 20px; height: 18px; margin-top: 2px; margin-bottom: 3px; }
.big .chev { display: inline-block; vertical-align: -1px; width: 6px; height: 6px; }
.cell-name { margin-top: 1px; }
.w44 { width: 44px; }
.w42 { width: 42px; }
.w25 { width: 27px; }
.w28 { width: 28px; }
.w32 { width: 32px; }
.w31 { width: 31px; }
.w41 { width: 40px; }
.w40 { width: 39px; }
.edit-list {
  width: 65px;
  padding: 1px 0 0 7px;
  box-sizing: border-box;
  display: flex;
  flex-direction: column;
  gap: 3.5px;
}
.gap { margin-left: 5px; }
.collapse {
  position: absolute;
  right: 6px;
  top: 52px;
  width: 7px;
  height: 7px;
}

/* formula bar */
.formula {
  height: 24px;
  flex: none;
  display: flex;
  align-items: center;
  padding: 2px 6px 0 5px;
  box-sizing: border-box;
  color: #dcdcdc;
  font-size: 8.8px;
}
.namebox, .fx-btns, .fx-input {
  height: 16px;
  box-sizing: border-box;
  border: 1px solid #686868;
  border-radius: 3px;
  display: flex;
  align-items: center;
}
.namebox { width: 66px; justify-content: space-between; padding: 0 2px 0 3px; }
.namebox .chev, .fx-input .chev { color: #ccc; }
.dots { width: 13px; text-align: center; font-size: 9px; }
.fx-btns { width: 49px; gap: 5px; padding-left: 5px; }
.fx-btns svg { width: 8px; height: 8px; }
.fx-btns em { font-family: "Liberation Serif", serif; font-size: 10px; font-weight: 700; color: #ddd; }
.fx-input { flex: 1; margin-left: 2px; justify-content: flex-end; padding-right: 3px; }

/* grid */
.sheet-area {
  height: 356px;
  flex: none;
  display: flex;
  overflow: hidden;
}
.sheet {
  flex: 1;
  min-width: 0;
  display: grid;
  grid-template-columns: 17px 42px 57px 42px 41px 42px 57px 42px 41px 42px 42px 41px 42px 42px 41px 42px 41px 42px 42px 41px 42px 41px 42px 42px;
  grid-template-rows: 13.5px repeat(28, 12.47px);
  background: #fff;
  overflow: hidden;
}
.corner { background: #505050; position: relative; }
.corner svg { width: 7px; height: 7px; margin: 5px 0 0 8px; }
.colhead {
  background: #505050;
  color: #d8d8d8;
  font-size: 8.8px;
  line-height: 13.5px;
  text-align: center;
  border-right: 1px solid #6c6c6c;
  box-sizing: border-box;
}
.colhead.sel { background: #6c6c6c; box-shadow: inset 0 -1px #4fa678; }
.rowhead {
  background: #5a5a5a;
  color: #e4e4e4;
  font-size: 8.8px;
  line-height: 12.4px;
  text-align: center;
  border-bottom: 1px solid #777;
  box-sizing: border-box;
}
.rowhead.sel { background: #777; box-shadow: inset -1px 0 #4fa678; }
.cell {
  border-right: 1px solid #e6e6e6;
  border-bottom: 1px solid #ececec;
  box-sizing: border-box;
  color: #333;
  font-family: "Liberation Sans Narrow", Roboto, sans-serif;
  font-size: 9.2px;
  letter-spacing: -.35px;
  line-height: 11.5px;
  padding: 0 1.5px 0 1.5px;
  white-space: nowrap;
  overflow: hidden;
}
.cell.right { text-align: right; letter-spacing: -.2px; }
.cell.money { padding-right: 4px; }
.cell.hash { letter-spacing: -.7px; padding: 0 1px 0 0; }
.cell.spill { overflow: visible; border-right-color: transparent; position: relative; z-index: 1; }
.cell.active {
  outline: 1.5px solid #1f7a4d;
  outline-offset: -1px;
  overflow: visible;
  position: relative;
  z-index: 2;
}
.cell.active::after {
  content: "";
  position: absolute;
  right: -2px;
  bottom: -2px;
  width: 3px;
  height: 3px;
  background: #1f7a4d;
}
.vscroll {
  width: 12px;
  background: #505050;
  display: flex;
  flex-direction: column;
  align-items: center;
  padding-top: 1px;
  box-sizing: border-box;
}
.vscroll svg { width: 8px; height: 8px; }
.vscroll i {
  flex: 1;
  width: 7px;
  margin: 1px 0 2px;
  background: #bcbcbc;
  border-radius: 4px;
}

/* sheet tabs */
.sheetbar {
  height: 20px;
  flex: none;
  display: flex;
  align-items: flex-start;
  background: #505050;
}
.nav { width: 8px; height: 8px; margin: 6px 0 0 14px; }
.nav + .nav { margin-left: 14px; }
.sheettab {
  width: 38px;
  margin-left: 29px;
  height: 18px;
  background: #fff;
  color: #333;
  font-size: 9.5px;
  font-weight: 500;
  text-align: center;
  line-height: 16px;
  border-radius: 0 0 4px 4px;
  box-sizing: border-box;
  padding-top: 1px;
}
.sheettab span {
  display: inline-block;
  width: 28px;
  height: 15px;
  border-bottom: 1.5px solid #4fa678;
}
.tabsep { width: 1px; height: 12px; background: #777; margin: 3px 0 0 2px; }
.plus { width: 14px; margin-left: 23px; text-align: center; font-size: 13px; line-height: 18px; color: #ddd; }
.sdots { margin-left: 450px; line-height: 19px; font-size: 9px; width: 8px; text-align: center; }
.hscroll {
  margin: 3px 0 0 3px;
  width: 374px;
  height: 11px;
  background: #3c3c3c;
  border-radius: 6px;
  display: flex;
  align-items: center;
  padding: 0 1px 0 2px;
  box-sizing: border-box;
}
.hscroll svg { width: 8px; height: 8px; }
.hscroll i { flex: 1; height: 6px; margin: 0 13px 0 1px; background: #bcbcbc; border-radius: 3px; }

/* status bar */
.status {
  height: 16px;
  flex: none;
  display: flex;
  align-items: center;
  padding-left: 7px;
  font-size: 7.8px;
  color: #dedede;
  background: #505050;
  border-top: 1px solid #5c5c5c;
  box-sizing: border-box;
  white-space: nowrap;
}
.ready { width: 32px; }
.acc { width: 11px; height: 11px; margin-right: 1px; }
.views { margin-left: auto; display: flex; }
.view {
  width: 26px;
  height: 15px;
  display: flex;
  align-items: center;
  justify-content: center;
}
.view.on { background: #666; }
.view svg { width: 10px; height: 10px; }
.zoomctl { width: 8px; text-align: center; font-size: 9px; margin-left: 3px; }
.slider { position: relative; width: 63px; height: 1px; margin-left: 3px; background: #bbb; }
.slider i { position: absolute; left: 31px; top: -4px; width: 3px; height: 9px; background: #ccc; }
.pct100 { margin-left: 5px; width: 17px; margin-right: 4px; }

/* taskbar */
.taskbar {
  flex: 1;
  min-height: 0;
  display: flex;
  align-items: center;
  background: #1c1c1f;
  color: #eee;
}
.weather {
  position: relative;
  width: 328px;
  display: flex;
  align-items: center;
  padding-left: 13px;
  box-sizing: border-box;
  gap: 5px;
}
.weather > svg { width: 16px; height: 12px; margin-top: 4px; }
.badge {
  position: absolute;
  left: 20px;
  top: -1px;
  width: 11px;
  height: 11px;
  border-radius: 50%;
  background: #d9262c;
  color: #fff;
  text-align: center;
  font-size: 8px;
  font-weight: 700;
  line-height: 11px;
}
.wtext { font-size: 8.8px; line-height: 10.5px; display: flex; flex-direction: column; }
.wtext small { font-size: 8.8px; color: #bbb; }
.center { display: flex; align-items: center; width: 341px; padding-left: 5px; box-sizing: border-box; }
.winlogo { width: 15px; height: 15px; }
.tsearch {
  width: 142px;
  height: 20px;
  margin: 0 9px;
  border-radius: 10px;
  background: #f4f4f4;
  display: flex;
  align-items: center;
  padding-left: 8px;
  box-sizing: border-box;
  gap: 6px;
  color: #666;
  font-size: 9.5px;
}
.tsearch svg { width: 11px; height: 11px; }
.tsearch .fly { width: 28px; height: 15px; margin-left: auto; margin-right: 2px; }
.tb { width: 16px; height: 16px; }
.tbgap { margin-right: 13px; }
.tbwrap {
  position: relative;
  width: 16px;
  height: 16px;
  margin-right: 13px;
}
.tbwrap i {
  position: absolute;
  left: 5px;
  bottom: -5px;
  width: 5px;
  height: 2px;
  border-radius: 1px;
  background: #9a9a9a;
}
.helpico b {
  position: absolute;
  right: -2px;
  top: -2px;
  width: 9px;
  height: 9px;
  border-radius: 50%;
  background: #f5c518;
}
.xlcur { margin: 0; }
.xlcur::before {
  content: "";
  position: absolute;
  left: -5px;
  top: -6px;
  width: 25px;
  height: 29px;
  background: #2b2b2e;
  border-radius: 3px;
  z-index: 0;
}
.xlcur svg { position: relative; }
.xlcur i { background: #4cc2ff; left: 3px; width: 10px; }
.tray { flex: 1; display: flex; align-items: center; padding-left: 168px; box-sizing: border-box; }
.t { width: 13px; height: 11px; margin-right: 3px; flex: none; }
.chevup { width: 9px; height: 9px; margin-right: 9px; }
.clock {
  width: 42px;
  margin-left: 1px;
  text-align: right;
  font-size: 8.6px;
  line-height: 10.5px;
  white-space: nowrap;
}
.bell { width: 10px; height: 12px; margin-left: 5px; }
.copilot { width: 16px; height: 16px; margin-left: 10px; }
</style>
